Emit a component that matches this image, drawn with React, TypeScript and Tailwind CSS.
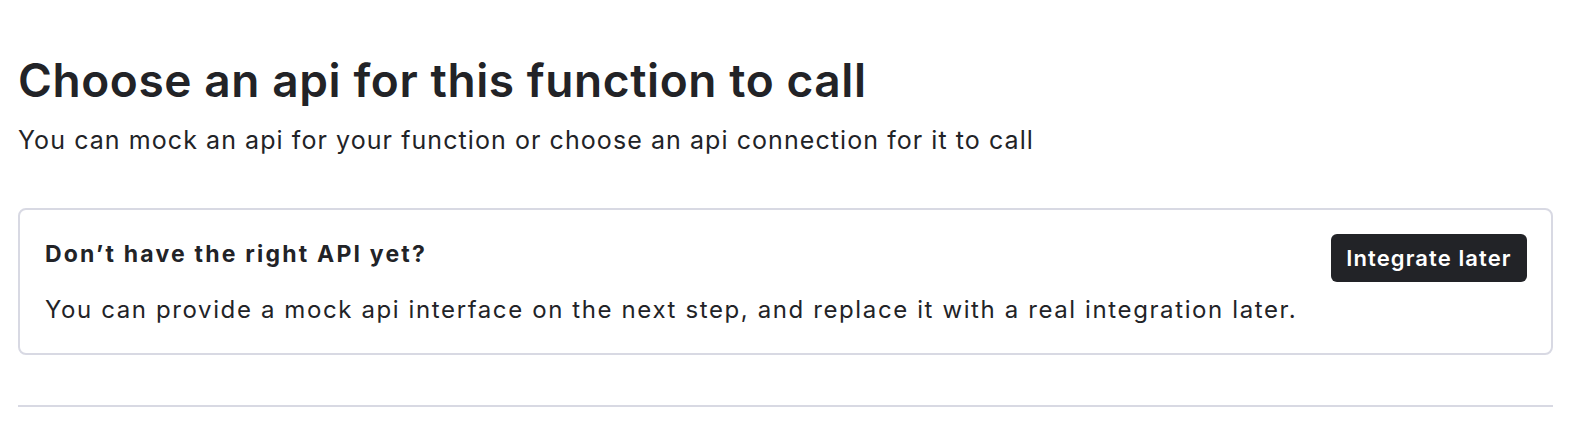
export default function App() {
  return (
    <div
      className="w-[1570px] h-[430px] bg-white text-[#222327] px-[18px] pt-[52px]"
      style={{ fontFamily: "Inter, 'Noto Sans', sans-serif" }}
    >
      <h1 className="text-[46px] leading-[56px] font-semibold tracking-[0.6px]">
        Choose an api for this function to call
      </h1>
      <p className="mt-[16px] text-[25px] leading-[32px] tracking-[1.07px]">
        You can mock an api for your function or choose an api connection for it to call
      </p>

      <div className="mt-[52px] w-[1535px] h-[147px] border-2 border-[#d8d9e3] rounded-[8px] pl-[25px] pr-[24px] pt-[24px] flex justify-between">
        <div className="mt-[5px]">
          <h2 className="text-[23px] leading-[30px] font-bold tracking-[2.2px]">Don’t have the right API yet?</h2>
          <p className="mt-[26px] text-[24px] leading-[30px] tracking-[1.61px]">
            You can provide a mock api interface on the next step, and replace it with a real integration later.
          </p>
        </div>
        <button className="w-[196px] h-[48px] rounded-[6px] bg-[#222327] text-white text-[22px] font-semibold tracking-[1.1px] self-start">
          Integrate later
        </button>
      </div>

      <div className="mt-[50px] w-[1535px] h-[2px] bg-[#d8d9e3]" />
    </div>
  );
}
